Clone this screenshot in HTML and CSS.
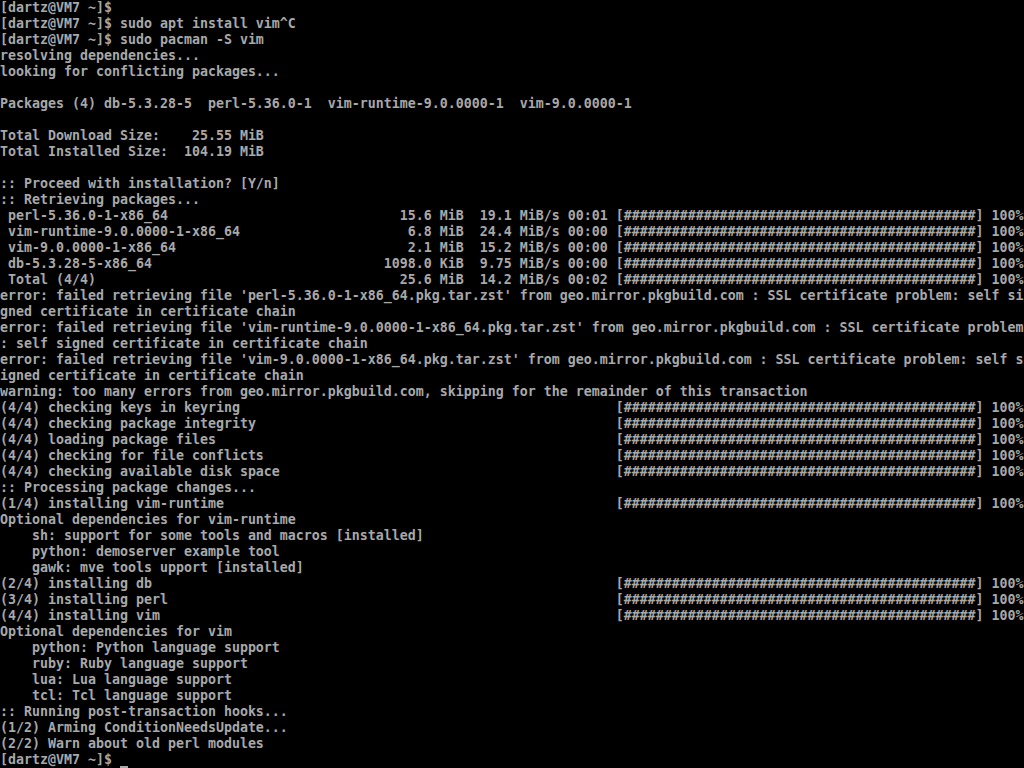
FILE: index.html
```html
<!DOCTYPE html>
<html lang="en">
<head>
<meta charset="utf-8">
<title>tty1</title>
<link rel="stylesheet" href="styles.css">
</head>
<body>
<div class="term">
<div class="ln">[dartz@VM7 ~]$</div>
<div class="ln">[dartz@VM7 ~]$ sudo apt install vim^C</div>
<div class="ln">[dartz@VM7 ~]$ sudo pacman -S vim</div>
<div class="ln">resolving dependencies...</div>
<div class="ln">looking for conflicting packages...</div>
<div class="ln"></div>
<div class="ln">Packages (4) db-5.3.28-5  perl-5.36.0-1  vim-runtime-9.0.0000-1  vim-9.0.0000-1</div>
<div class="ln"></div>
<div class="ln">Total Download Size:    25.55 MiB</div>
<div class="ln">Total Installed Size:  104.19 MiB</div>
<div class="ln"></div>
<div class="ln">:: Proceed with installation? [Y/n]</div>
<div class="ln">:: Retrieving packages...</div>
<div class="ln"><span class="c48"> perl-5.36.0-1-x86_64</span><span class="size">15.6 MiB</span>  19.1 MiB/s 00:01 [############################################] 100%</div>
<div class="ln"><span class="c48"> vim-runtime-9.0.0000-1-x86_64</span><span class="size">6.8 MiB</span>  24.4 MiB/s 00:00 [############################################] 100%</div>
<div class="ln"><span class="c48"> vim-9.0.0000-1-x86_64</span><span class="size">2.1 MiB</span>  15.2 MiB/s 00:00 [############################################] 100%</div>
<div class="ln"><span class="c48"> db-5.3.28-5-x86_64</span><span class="size">1098.0 KiB</span>  9.75 MiB/s 00:00 [############################################] 100%</div>
<div class="ln"><span class="c48"> Total (4/4)</span><span class="size">25.6 MiB</span>  14.2 MiB/s 00:02 [############################################] 100%</div>
<div class="ln">error: failed retrieving file 'perl-5.36.0-1-x86_64.pkg.tar.zst' from geo.mirror.pkgbuild.com : SSL certificate problem: self si</div>
<div class="ln">gned certificate in certificate chain</div>
<div class="ln">error: failed retrieving file 'vim-runtime-9.0.0000-1-x86_64.pkg.tar.zst' from geo.mirror.pkgbuild.com : SSL certificate problem</div>
<div class="ln">: self signed certificate in certificate chain</div>
<div class="ln">error: failed retrieving file 'vim-9.0.0000-1-x86_64.pkg.tar.zst' from geo.mirror.pkgbuild.com : SSL certificate problem: self s</div>
<div class="ln">igned certificate in certificate chain</div>
<div class="ln">warning: too many errors from geo.mirror.pkgbuild.com, skipping for the remainder of this transaction</div>
<div class="ln"><span class="c77">(4/4) checking keys in keyring</span>[############################################] 100%</div>
<div class="ln"><span class="c77">(4/4) checking package integrity</span>[############################################] 100%</div>
<div class="ln"><span class="c77">(4/4) loading package files</span>[############################################] 100%</div>
<div class="ln"><span class="c77">(4/4) checking for file conflicts</span>[############################################] 100%</div>
<div class="ln"><span class="c77">(4/4) checking available disk space</span>[############################################] 100%</div>
<div class="ln">:: Processing package changes...</div>
<div class="ln"><span class="c77">(1/4) installing vim-runtime</span>[############################################] 100%</div>
<div class="ln">Optional dependencies for vim-runtime</div>
<div class="ln">    sh: support for some tools and macros [installed]</div>
<div class="ln">    python: demoserver example tool</div>
<div class="ln">    gawk: mve tools upport [installed]</div>
<div class="ln"><span class="c77">(2/4) installing db</span>[############################################] 100%</div>
<div class="ln"><span class="c77">(3/4) installing perl</span>[############################################] 100%</div>
<div class="ln"><span class="c77">(4/4) installing vim</span>[############################################] 100%</div>
<div class="ln">Optional dependencies for vim</div>
<div class="ln">    python: Python language support</div>
<div class="ln">    ruby: Ruby language support</div>
<div class="ln">    lua: Lua language support</div>
<div class="ln">    tcl: Tcl language support</div>
<div class="ln">:: Running post-transaction hooks...</div>
<div class="ln">(1/2) Arming ConditionNeedsUpdate...</div>
<div class="ln">(2/2) Warn about old perl modules</div>
<div class="ln">[dartz@VM7 ~]$ <span class="cursor"></span></div>
</div>
</body>
</html>
```

FILE: styles.css
```css
html, body {
  margin: 0;
  padding: 0;
  background: #000;
}

body {
  width: 1024px;
  height: 768px;
  overflow: hidden;
}

.term {
  width: 1024px;
  height: 768px;
  overflow: hidden;
  font-family: "DejaVu Sans Mono", "Liberation Mono", monospace;
  font-size: 13.29px;
  font-weight: bold;
  line-height: 16px;
  color: #a8a8a8;
}

.ln {
  height: 16px;
  overflow: hidden;
  white-space: pre;
}

.c48 {
  display: inline-block;
  width: 48ch;
}

.size {
  display: inline-block;
  width: 10ch;
  text-align: right;
}

.c77 {
  display: inline-block;
  width: 77ch;
}

.cursor {
  display: inline-block;
  width: 8px;
  height: 16px;
  vertical-align: top;
  box-shadow: inset 0 -2px 0 #a8a8a8;
}
```
